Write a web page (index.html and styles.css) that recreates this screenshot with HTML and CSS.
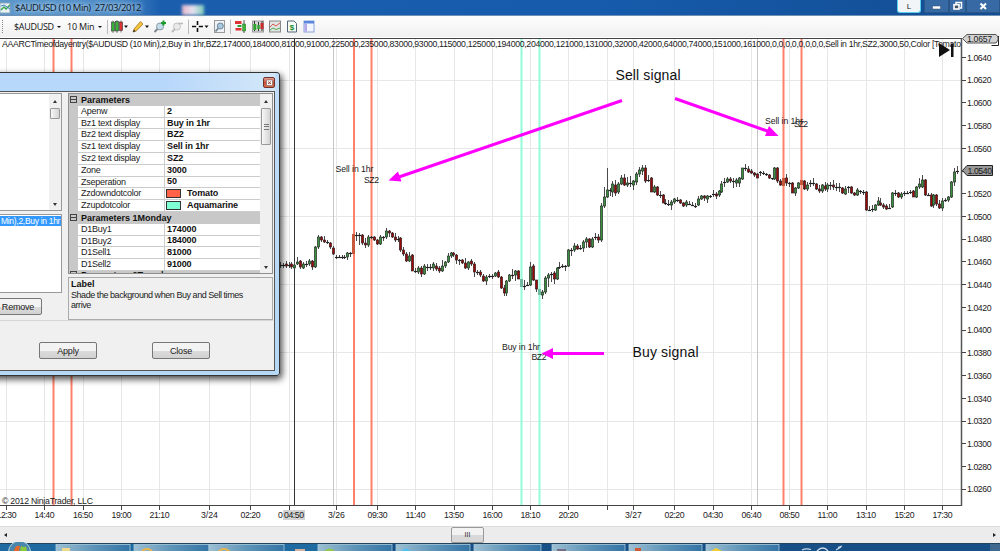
FILE: index.html
```html
<!DOCTYPE html>
<html lang="en">
<head>
    <meta charset="UTF-8">
    <meta name="viewport" content="width=device-width, initial-scale=1.0">
    <title>$AUDUSD (10 Min) 27/03/2012</title>
    <link rel="stylesheet" href="styles.css">
</head>
<body>

    <div class="titlebar">
        <svg class="app-icon" width="11" height="12" viewBox="0 0 11 12">
            <rect x="0" y="1" width="10" height="10" fill="#e9f3f6" stroke="#8ba8bb"/>
            <path d="M1 8L4 5L6 7L10 3" fill="none" stroke="#38a34a" stroke-width="1.4"/>
            <path d="M1 4L4 3L7 5L10 7" fill="none" stroke="#3d7fc4"/>
        </svg>
        <span class="title">$AUDUSD (10 Min)&nbsp; 27/03/2012</span>
        <div class="smudge"></div>
        <div class="window-buttons">
            <span class="link-btn">L</span>
            <span class="win-btn">
                <svg width="28" height="13" viewBox="0 0 28 13"><rect x="9.500" y="6" width="8" height="3" fill="#fff" stroke="#334b70" stroke-width=".5"/></svg>
            </span>
            <span class="win-btn small">
                <svg width="15" height="13" viewBox="0 0 15 13"><path d="M6 4V2.500H11.500V8H10" fill="none" stroke="#fff" stroke-width="1.500"/><rect x="4" y="4.700" width="5" height="4.300" fill="#456" stroke="#fff" stroke-width="1.600"/></svg>
            </span>
            <span class="win-btn close">
                <svg width="33" height="13" viewBox="0 0 33 13"><path d="M13.500 3.500L19 9M19 3.500L13.500 9" stroke="#fff" stroke-width="2"/></svg>
            </span>
        </div>
    </div>

    <div class="toolbar">
        <span class="grip"></span>
        <span class="tool-text symbol">$AUDUSD</span><i class="arrow"></i>
        <span class="tool-text interval">10 Min</span><i class="arrow"></i>
        <span class="divider"></span>
        <svg class="icons" width="210" height="20" viewBox="108 16 210 20">
            <g stroke="#333" stroke-width=".6">
                <path d="M113 19.500V32M117 19V32M121 19.500V31.500"/>
                <rect x="111.500" y="21" width="3" height="9" fill="#35b235"/>
                <rect x="115.500" y="20.500" width="3" height="9.500" fill="#35b235"/>
                <rect x="119.500" y="21" width="3" height="8.500" fill="#d33"/>
            </g>
            <path d="M124 24.500h4l-2 2.500zM145 24.500h4l-2 2.500zM204.500 24.500h4l-2 2.500z" fill="#111"/>
            <path d="M133 31L134 28L140.500 20.500L143 23L136.500 29.800Z" fill="#f5c33b" stroke="#9a6a17" stroke-width=".7"/>
            <path d="M133 31.200L134 28.500L135.700 30.200Z" fill="#333"/>
            <circle cx="160" cy="25.500" r="3.500" fill="#c3dcea" stroke="#8a9aa5"/>
            <path d="M154.500 31L157.500 28" stroke="#7b8790" stroke-width="2"/>
            <path d="M163.500 19.500v5M161 22h5" stroke="#1a9b2d" stroke-width="2"/>
            <circle cx="177" cy="25.500" r="3.500" fill="#e9e9e9" stroke="#c4c4c4"/>
            <path d="M172 31L175 28" stroke="#bbb" stroke-width="2"/>
            <path d="M178 22.500h5" stroke="#bbb" stroke-width="1.600"/>
            <path d="M188.500 18.500V33M230.500 18.500V33" stroke="#bbb"/>
            <path d="M192 25.500h4.200M198.800 25.500h4.200M197.500 20v4M197.500 27v4" stroke="#111" stroke-width="1.600"/>
            <rect x="214.500" y="19.500" width="10" height="12" fill="#eef2f6" stroke="#999"/>
            <circle cx="220.300" cy="25" r="3" fill="#a9c9e0" stroke="#6e8595"/>
            <path d="M215.500 30.500L218 27.500" stroke="#6e8595" stroke-width="1.800"/>
            <rect x="235" y="20" width="6.500" height="3" fill="#d33"/>
            <rect x="237.500" y="24" width="4" height="2" fill="#2e9e3a"/>
            <rect x="235.500" y="27" width="6" height="2.500" fill="#d33"/>
            <path d="M244 19V32" stroke="#555"/>
            <rect x="242.700" y="23" width="3" height="7" fill="#3db63d" stroke="#246b24" stroke-width=".5"/>
            <rect x="252.500" y="20" width="11" height="11" fill="#d8d8d8" stroke="#999"/>
            <path d="M254.500 20V30M258.500 21V30M262 20V30" stroke="#333"/>
            <rect x="253.300" y="23" width="3" height="6" fill="#2ea32e"/>
            <rect x="257.300" y="24" width="2.500" height="4" fill="#2ea32e"/>
            <rect x="260.500" y="22" width="3" height="6" fill="#c92b2b"/>
            <rect x="269.500" y="20" width="11" height="11" fill="#dfe5e0" stroke="#888"/>
            <path d="M270 26L273 23L276 25L280 22" fill="none" stroke="#d55"/>
            <path d="M270 29L273 27L276 28.500L280 27" fill="none" stroke="#5a5"/>
            <path d="M287.500 20H294L296.500 22.500V31H287.500Z" fill="#f4faf4" stroke="#567"/>
            <text x="289.700" y="29" class="dollar">$</text>
            <rect x="304" y="20" width="10" height="11" fill="#f4f6ff" stroke="#8aa3d8"/>
            <rect x="304" y="20" width="10" height="2.500" fill="#5a86dd"/>
            <rect x="304.500" y="23" width="2.500" height="7.500" fill="#b5a8ea"/>
        </svg>
    </div>

    <div class="workspace">
        <svg class="chart" id="chart" width="1000" height="489" viewBox="0 37 1000 489">
            <g id="grid"></g>
            <g class="session">
                <path d="M333.500 38V505M757.500 38V505"/>
            </g>
            <g id="zones"></g>
            <path d="M294.500 38V505" stroke="#333"/>
            <g id="candles"></g>
            <g id="shades"></g>

            <g class="chart-text">
                <text x="2" y="47" textLength="959" lengthAdjust="spacing">AAARCTimeofdayentry($AUDUSD (10 Min),2,Buy in 1hr,BZ2,174000,184000,81000,91000,225000,235000,83000,93000,115000,125000,194000,204000,121000,131000,32000,42000,64000,74000,151000,161000,0,0,0,0,0,0,0,0,Sell in 1hr,SZ2,3000,50,Color [Tomato</text>
                <text x="335.500" y="172" textLength="38">Sell in 1hr</text>
                <text x="364" y="182.500" textLength="15">SZ2</text>
                <text x="765" y="123.500" textLength="38">Sell in 1hr</text>
                <text x="794" y="126.500" textLength="14">SZ2</text>
                <text x="502" y="349.500" textLength="38">Buy in 1hr</text>
                <text x="531.500" y="360" textLength="15">BZ2</text>
                <text x="2" y="504" textLength="91">© 2012 NinjaTrader, LLC</text>
            </g>

            <g class="note">
                <text x="615.500" y="80" textLength="65">Sell signal</text>
                <text x="632.500" y="356.500" textLength="66">Buy signal</text>
            </g>
            <g class="pointer">
                <path d="M622 100.500L396 178M675 98.500L770 132M604 353.500H548"/>
                <polygon points="388.500,180.500 398,171.500 401.500,181.500"/>
                <polygon points="778.500,136 769,126 765,136"/>
                <polygon points="541.500,353.500 553,348 553,359"/>
            </g>

            <path d="M939 43L950 50L939 57Z" fill="#111"/>
            <rect x="951" y="43.500" width="2.500" height="13.500" fill="#111"/>
            <path d="M0 38.500H961.500M0 505.500H961.500" stroke="#444"/>
            <path d="M961.500 38V506" stroke="#555" stroke-width="1.500"/>
            <g id="axis"></g>

            <path d="M991.500 45.500H998.500V36" fill="none" stroke="#222"/>
            <path d="M962.500 38.500L967 34.500H996L998 37V40L996 43H967Z" fill="#d3d3d3" stroke="#555"/>
            <path d="M962.500 170.500L967 165.500H992.500V175.500H967Z" fill="#999" stroke="#222"/>
            <g class="chart-text">
                <text x="967" y="42" textLength="25">1.0657</text>
                <text x="967.500" y="174" textLength="24.500">1.0540</text>
            </g>
        </svg>

        <div class="dialog">
            <div class="dialog-title">
                <span class="dialog-close">
                    <svg width="9" height="8" viewBox="0 0 9 8"><rect x="1.500" y="1" width="6" height="5.500" rx="1" fill="#fff" stroke="#555" stroke-width=".5"/><path d="M3 2.500L6 5M6 2.500L3 5" stroke="#943" stroke-width="1"/></svg>
                </span>
            </div>
            <div class="dialog-body">
                <div class="dialog-columns">
                    <div class="left-col">
                        <div class="list">
                            <div class="scroll">
                                <i class="up"></i><b class="thumb"></b><i class="down"></i>
                            </div>
                        </div>
                        <div class="list-2"><span class="selected">Min),2,Buy in 1hr</span></div>
                        <button class="btn remove">Remove</button>
                    </div>
                    <div class="right-col">
                        <div class="props">
                            <div class="rows">
                                <div class="group"><span class="minus"></span>Parameters</div>
                                <div class="row"><span>Apenw</span><b>2</b></div>
                                <div class="row"><span>Bz1 text display</span><b>Buy in 1hr</b></div>
                                <div class="row"><span>Bz2 text display</span><b>BZ2</b></div>
                                <div class="row"><span>Sz1 text display</span><b>Sell in 1hr</b></div>
                                <div class="row"><span>Sz2 text display</span><b>SZ2</b></div>
                                <div class="row"><span>Zone</span><b>3000</b></div>
                                <div class="row"><span>Zseperation</span><b>50</b></div>
                                <div class="row"><span>Zzdowndotcolor</span><b><i class="swatch tomato"></i>Tomato</b></div>
                                <div class="row"><span>Zzupdotcolor</span><b><i class="swatch aqua"></i>Aquamarine</b></div>
                                <div class="group"><span class="minus"></span>Parameters 1Monday</div>
                                <div class="row"><span>D1Buy1</span><b>174000</b></div>
                                <div class="row"><span>D1Buy2</span><b>184000</b></div>
                                <div class="row"><span>D1Sell1</span><b>81000</b></div>
                                <div class="row"><span>D1Sell2</span><b>91000</b></div>
                                <div class="group last"><span class="minus"></span>Parameters 2Tuesday</div>
                            </div>
                            <div class="scroll">
                                <i class="up"></i><b class="thumb long"></b><i class="down"></i>
                            </div>
                        </div>
                        <div class="help">
                            <b>Label</b>
                            <p>Shade the background when Buy and Sell times<br>arrive</p>
                        </div>
                    </div>
                </div>
                <div class="dialog-footer">
                    <button class="btn">Apply</button>
                    <button class="btn">Close</button>
                    <span class="resize"></span>
                </div>
            </div>
        </div>
    </div>

    <div class="hscroll">
        <i class="left"></i>
        <span class="hthumb">III</span>
        <i class="right"></i>
    </div>

    <div class="taskbar">
        <svg width="1000" height="9" viewBox="0 542 1000 9">
            <defs>
                <linearGradient id="task" x1="0" x2="1">
                    <stop offset="0" stop-color="#9dbfd2"/>
                    <stop offset=".5" stop-color="#5e94b8"/>
                    <stop offset="1" stop-color="#3474a6"/>
                </linearGradient>
            </defs>
            <rect y="543" width="1000" height="8" fill="#174f86"/>
            <rect y="543" width="320" height="8" fill="#1f6ba1"/>
            <g fill="url(#task)" stroke="#a9cbdd" stroke-width=".8">
                <rect x="56" y="544.500" width="74" height="9"/>
                <rect x="134" y="544.500" width="75" height="9"/>
                <rect x="209" y="544.500" width="75" height="9"/>
                <rect x="318" y="544.500" width="74" height="9"/>
                <rect x="396" y="544.500" width="74" height="9"/>
                <rect x="474" y="544.500" width="67" height="9"/>
                <rect x="552" y="544.500" width="73" height="9"/>
                <rect x="629" y="544.500" width="73" height="9"/>
                <rect x="706" y="544.500" width="73" height="9"/>
            </g>
            <path d="M0 543.500H1000" stroke="#24435c"/>
            <circle cx="19.500" cy="552" r="11" fill="#4a86ab" stroke="#b4d3e2"/>
            <path d="M14 551Q15 545 20 546L19 551Z" fill="#e5672c"/>
            <path d="M20 551L21 546Q25 548 26 546L27 551Z" fill="#8cc63f"/>
            <rect x="62" y="548" width="8" height="3" fill="#f0d98a"/>
            <path d="M142 551Q147 547 152 551M219 551Q224 547 229 551" fill="none" stroke="#eab54a" stroke-width="2"/>
            <rect x="295" y="549" width="10" height="2" fill="#d8b0a0"/>
            <path d="M324 551Q330 546 335 551Z" fill="#93c94a"/>
            <path d="M401 551Q406 546 411 551Z" fill="#52c0ee"/>
            <rect x="557" y="549" width="9" height="2" fill="#766e88"/>
            <rect x="635" y="548" width="6" height="3" fill="#cf5937"/>
            <path d="M711 551L716 548L722 551Z" fill="#f5cf32"/>
            <path d="M802 550Q806 548 811 549.500M817 551Q823 545 828 551M836 550L841 547M838 547.500L842 546" fill="none" stroke="#cbdcea" stroke-width="1.300"/>
            <rect x="990" y="544" width="10" height="7" fill="#41698f"/>
        </svg>
    </div>

    <script src="chart.js"></script>
</body>
</html>
```

FILE: styles.css
```css
* {
    box-sizing: border-box;
}
body {
    margin: 0;
    width: 1000px;
    height: 551px;
    overflow: hidden;
    display: flex;
    flex-direction: column;
    background: #fff;
    font-family: "Liberation Sans", Arial, sans-serif;
    font-size: 9px;
    color: #222;
}

/* title bar */
.titlebar {
    height: 16px;
    flex: none;
    display: flex;
    align-items: center;
    background: linear-gradient(90deg, #5d97cb 0, #4c8bc6 120px, #1b5eae 160px, #165bac 600px, #134d92 1000px);
    border-bottom: 1px solid #6f91b5;
}
.title {
    margin-left: 4px;
    font-family: "Open Sans", "Noto Sans", sans-serif;
    font-size: 9.5px;
    letter-spacing: -0.42px;
    width: 127px;
    white-space: nowrap;
    color: #0b1623;
    text-shadow: 0 0 4px #cfe6fa, 0 0 5px #b9d8f2;
}
.smudge {
    margin-left: 40px;
    width: 22px;
    height: 10px;
    align-self: flex-end;
    background: linear-gradient(90deg, #e5b5c8, #e6e2f0 50%, #79c9b7);
    filter: blur(1.5px);
}
.window-buttons {
    margin-left: auto;
    align-self: flex-start;
    display: flex;
}
.link-btn {
    width: 24px;
    height: 13px;
    margin-right: 3px;
    border: 1px solid #59cfee;
    border-top: 0;
    border-radius: 0 0 3px 3px;
    background: #f2f5f7;
    text-align: center;
    font-size: 8px;
    line-height: 13px;
}
.win-btn {
    width: 25px;
    height: 13px;
    display: flex;
    justify-content: center;
    overflow: hidden;
    background: #376aa4;
    border: 1px solid #2a5688;
    border-top: 0;
}
.win-btn svg {
    flex: none;
}
.win-btn.small {
    width: 17px;
}
.win-btn.close {
    width: 34px;
}

/* toolbar */
.toolbar {
    height: 21px;
    flex: none;
    display: flex;
    align-items: center;
    background: linear-gradient(#fdfdfd, #f1f1f1);
}
.grip {
    width: 2px;
    height: 13px;
    margin: 0 10px 0 2px;
    border-left: 1px dotted #888;
}
.tool-text {
    font-family: "Open Sans", "Noto Sans", sans-serif;
    font-size: 9px;
    white-space: nowrap;
    color: #111;
}
.symbol {
    width: 43px;
    letter-spacing: -0.3px;
}
.interval {
    width: 31px;
    margin-left: 6px;
    letter-spacing: -0.2px;
}
.arrow {
    border: 2px solid transparent;
    border-top: 2.5px solid #111;
    border-bottom: 0;
}
.divider {
    width: 1px;
    height: 14px;
    margin-left: 5px;
    background: #bbb;
}
.dollar {
    font-size: 8px;
    font-weight: bold;
    fill: #188a2a;
}

/* chart */
.workspace {
    position: relative;
    height: 489px;
    flex: none;
}
.chart {
    display: block;
    overflow: visible;
}
.chart-text {
    font-size: 8.7px;
    fill: #1a1a1a;
}
.note {
    font-size: 14px;
    fill: #111;
}
.pointer path {
    stroke: #ff00ff;
    stroke-width: 3;
    fill: none;
}
.pointer polygon {
    fill: #ff00ff;
}
.session path {
    stroke: #c6c6c6;
}
.grid-line {
    stroke: #e7e7e7;
}
.tick {
    stroke: #444;
}
.x-label {
    text-anchor: middle;
}
.wick {
    stroke: #4a4a4a;
}
.up-bar {
    fill: #3c8f40;
    stroke: #222;
    stroke-width: 0.6;
}
.down-bar {
    fill: #9a0808;
    stroke: #222;
    stroke-width: 0.6;
}
.doji {
    stroke: #222;
    stroke-width: 1.2;
}

/* parameter dialog */
.dialog {
    position: absolute;
    left: -10px;
    top: 35px;
    width: 290px;
    height: 304px;
    padding: 0 4px 4px 0;
    border: 1px solid #333;
    border-radius: 0 3px 3px 0;
    background: linear-gradient(#c0dcf8, #b5d8f5);
    box-shadow: 2px 3px 7px rgba(0, 0, 0, 0.75);
}
.dialog-title {
    height: 18px;
    display: flex;
    justify-content: flex-end;
    padding: 4px 0 0;
    background: linear-gradient(90deg, #b7d7fb 60%, #d3e7f8);
}
.dialog-close {
    width: 12px;
    height: 11px;
    display: flex;
    align-items: center;
    justify-content: center;
    background: linear-gradient(#e9a193, #c84e36 50%, #d96d50);
    border: 1px solid #6d322b;
    border-radius: 2px;
}
.dialog-body {
    height: 280px;
    border: 1px solid #555;
    background: #f0f0f0;
    padding: 1px 1px 0 8px;
}
.dialog-columns {
    height: 228px;
    display: flex;
    gap: 6px;
    border-bottom: 1px solid #d7d7d7;
}
.left-col {
    width: 62px;
    flex: none;
    display: flex;
    flex-direction: column;
}
.list {
    height: 118px;
    background: #fff;
    border: 1px solid #999;
    border-left: 0;
    display: flex;
    justify-content: flex-end;
}
.list-2 {
    height: 79px;
    margin-top: 3px;
    background: #fff;
    border: 1px solid #999;
    border-left: 0;
    overflow: hidden;
}
.selected {
    display: block;
    height: 10px;
    margin-top: 1px;
    padding-left: 1px;
    line-height: 10px;
    font-size: 8.5px;
    letter-spacing: -0.3px;
    white-space: nowrap;
    background: #3399ff;
    color: #fff;
}
.scroll {
    width: 12px;
    background: #f0f0f0;
    display: flex;
    flex-direction: column;
    align-items: center;
    padding: 6px 0 4px;
}
.up {
    border: 2px solid transparent;
    border-bottom: 3px solid #333;
    border-top: 0;
}
.down {
    margin-top: auto;
    border: 2px solid transparent;
    border-top: 3px solid #333;
    border-bottom: 0;
}
.thumb {
    width: 10px;
    height: 11px;
    margin-top: 5px;
    border: 1px solid #999;
    border-radius: 1px;
    background: linear-gradient(90deg, #f7f7f7, #d4d4d4);
}
.thumb.long {
    height: 37px;
    display: flex;
    align-items: center;
    justify-content: center;
}
.thumb.long::after {
    content: "";
    width: 5px;
    height: 6px;
    background: repeating-linear-gradient(#777 0 1px, transparent 1px 2.4px);
}
.right-col {
    width: 205px;
    flex: none;
}
.props {
    height: 181px;
    display: flex;
    border: 1px solid #8f8f8f;
    background: #c8c8c8;
    overflow: hidden;
}
.rows {
    width: 191px;
}
.group {
    height: 11.8px;
    display: flex;
    align-items: center;
    background: #c8c8c8;
    font-weight: bold;
    font-size: 9px;
    color: #111;
}
.group.last {
    height: 2px;
    align-items: flex-start;
    line-height: 9px;
    overflow: hidden;
}
.minus {
    width: 7px;
    height: 7px;
    flex: none;
    margin: 0 4px 0 1px;
    border: 1px solid #444;
    background: linear-gradient(transparent 2px, #444 2px 3px, transparent 3px);
}
.row {
    height: 11.8px;
    margin-left: 9px;
    display: flex;
    line-height: 11px;
    font-size: 9px;
    background: #fff;
    border-bottom: 1px solid #ccc;
}
.row span {
    width: 87px;
    padding-left: 3px;
    border-right: 1px solid #ccc;
    letter-spacing: -0.25px;
}
.row b {
    padding-left: 2px;
    display: flex;
    align-items: center;
    letter-spacing: -0.1px;
    color: #111;
}
.swatch {
    width: 15px;
    height: 9px;
    margin: 0 6px 0 -1px;
    border: 1px solid #333;
}
.tomato {
    background: #ff6347;
}
.aqua {
    background: #7fffd4;
}
.help {
    height: 43px;
    margin-top: 3px;
    padding: 1px 2px;
    border: 1px solid #aaa;
    line-height: 11px;
}
.help b {
    color: #111;
}
.help p {
    margin: 1px 0 0;
    line-height: 9.5px;
    white-space: nowrap;
    letter-spacing: -0.45px;
    font-size: 9px;
}
.btn {
    width: 58px;
    height: 17px;
    padding: 0;
    border: 1px solid #777;
    border-radius: 2px;
    background: linear-gradient(#f3f3f3 50%, #dcdcdc 50%, #d1d1d1);
    font: 9px "Liberation Sans", Arial, sans-serif;
    letter-spacing: -0.2px;
    color: #222;
}
.btn.remove {
    width: 45px;
    margin: 5px 0 0 -3px;
    padding: 0 3px 0 0;
}
.dialog-footer {
    position: relative;
    display: flex;
    gap: 55px;
    padding: 21px 0 0 39px;
}
.resize {
    position: absolute;
    right: 0;
    bottom: -10px;
    width: 6px;
    height: 6px;
    background: radial-gradient(#bbb 40%, transparent 45%) 0 0 / 2px 2px;
    clip-path: polygon(100% 0, 100% 100%, 0 100%);
}

/* bottom scroll bar and task bar */
.hscroll {
    height: 17px;
    flex: none;
    display: flex;
    align-items: center;
    background: #ececec;
    border-top: 1px solid #ddd;
}
.left {
    margin-left: 4px;
    border: 2px solid transparent;
    border-right: 3px solid #222;
    border-left: 0;
}
.right {
    margin: 0 4px 0 auto;
    border: 2px solid transparent;
    border-left: 3px solid #222;
    border-right: 0;
}
.hthumb {
    width: 33px;
    height: 16px;
    margin-left: 444px;
    border: 1px solid #999;
    border-radius: 2px;
    background: linear-gradient(#f2f2f2 50%, #d8d8d8 50%);
    text-align: center;
    font-size: 7px;
    line-height: 13px;
}
.taskbar {
    height: 9px;
    flex: none;
    margin-top: -1px;
}
.taskbar svg {
    display: block;
}
```

FILE: chart.js
```js
const NS = "http://www.w3.org/2000/svg";

function add(parent, tag, attrs, text) {
    const el = document.createElementNS(NS, tag);
    for (const key in attrs) el.setAttribute(key, attrs[key]);
    if (text) el.textContent = text;
    document.getElementById(parent).appendChild(el);
    return el;
}

// time axis
const times = [
    [6.5, "12:30"], [44.5, "14:40"], [83, "16:50"], [121.5, "19:00"], [159.5, "21:10"],
    [209.5, "3/24"], [250.5, "02:20"], [289, ""], [336.5, "3/26"], [377.5, "09:30"],
    [415.5, "11:40"], [454, "13:50"], [492.5, "16:00"], [530.5, "18:10"], [568.5, "20:20"],
    [607, ""], [633.5, "3/27"], [674.5, "02:20"], [713, "04:30"], [751.5, "06:40"],
    [789.5, "08:50"], [827.5, "11:00"], [866, "13:10"], [904.5, "15:20"], [942.5, "17:30"]
];
times.forEach(([x, label]) => {
    const gx = Math.floor(x) + 0.5;
    add("grid", "path", { d: `M${gx} 39V505`, class: "grid-line" });
    add("axis", "path", { d: `M${gx} 505V510`, class: "tick" });
    const t = add("axis", "text", { x: x, y: 518, class: "chart-text x-label" }, label);
    if (label.includes(":")) t.setAttribute("textLength", 20);
});
// cursor time
add("axis", "text", { x: 278, y: 518, class: "chart-text" }, "0");
add("axis", "rect", { x: 283, y: 510, width: 22, height: 10, fill: "#d3d3d3" });
add("axis", "text", { x: 294, y: 518, class: "chart-text x-label", textLength: 20 }, "04:50");

// price axis
for (let i = 0; i < 20; i++) {
    const y = 57.5 + i * 22.72;
    const line = Math.floor(y) + 0.5;
    if (i % 3 === 1) add("grid", "path", { d: `M0 ${line}H961`, class: "grid-line" });
    add("axis", "path", { d: `M962 ${line}h4`, class: "tick" });
    if (i !== 5) {
        add("axis", "text", { x: 967, y: y + 3.2, class: "chart-text", textLength: 24.5 }, (1.064 - i * 0.002).toFixed(4));
    }
}

// buy and sell time markers
const zones = [[53.5, "sell"], [71.5, "sell"], [354, "sell"], [371.5, "sell"], [521.5, "buy"], [539.5, "buy"], [783.5, "sell"], [801.5, "sell"]];
zones.forEach(([x, type]) => {
    add("zones", "path", { d: `M${x} 39V505`, stroke: type === "sell" ? "#ff8069" : "#94fbd9", "stroke-width": 2 });
});

// high, body top, body bottom, low, direction (g up, r down, d flat)
const bars = `262 265 266 268 d|263 265 266 268 d|261 264 266 268 r|262 265 266 268 d|
262 264 267 269 r|262 265 268 269 g|257 262 264 265 g|260 261 267 269 r|262 264 268 269 g|261 264 265 267 d|259 261 264 266 g|260 261 267 270 r|246 247 267 268 g|235 237 247 249 g|
236 237 240 242 r|236 240 242 243 r|240 242 243 244 d|242 243 247 249 r|246 248 254 255 r|255 257 258 259 d|255 257 257 258 d|255 257 257 259 d|255 257 258 259 d|252 253 257 260 g|252 253 254 257 d|
234 234 254 254 s|232 235 235 241 d|233 235 235 245 d|234 235 243 245 r|238 243 245 248 r|235 237 245 247 g|236 237 238 239 d|236 237 240 241 r|239 240 244 245 r|235 237 244 245 g|236 237 237 241 d|
228 231 237 239 g|230 231 233 237 r|232 233 237 238 r|233 237 240 242 r|236 239 240 242 d|237 238 250 252 r|247 250 254 256 r|252 254 261 262 r|252 256 261 262 g|254 255 271 271 r|268 271 271 273 d|
266 268 272 274 g|266 268 274 277 r|264 266 274 275 g|264 267 267 271 d|264 267 268 270 d|262 264 268 271 g|263 266 269 271 r|266 268 271 273 r|260 266 271 272 g|261 262 266 268 g|253 256 262 263 g|
252 253 256 258 g|252 253 255 257 r|254 255 260 264 r|259 260 260 265 d|259 260 263 264 r|258 263 268 269 r|261 262 268 270 g|259 261 264 266 r|262 264 272 277 r|270 272 272 275 d|270 272 275 277 r|
274 276 281 282 r|275 277 281 285 g|274 276 277 278 d|274 276 276 279 d|272 273 276 277 g|270 272 277 278 r|276 277 288 289 r|285 288 293 296 r|280 281 293 296 g|274 275 281 282 g|269 275 275 279 d|
270 271 275 281 g|270 271 279 279 r|278 279 287 287 b|280 286 287 290 d|282 285 285 286 d|262 267 285 286 g|264 266 280 281 r|280 280 289 292 r|288 289 295 299 b|290 292 295 299 g|276 278 292 294 g|
273 275 278 287 g|272 274 276 282 d|271 273 279 284 r|267 268 279 280 g|262 267 267 269 d|264 266 266 268 d|265 266 267 271 d|249 250 266 267 g|248 250 250 256 d|243 246 250 252 g|244 246 249 250 r|
245 248 248 250 d|240 242 248 252 g|237 239 242 248 g|238 239 247 248 r|237 239 247 248 g|233 237 238 240 d|234 237 240 243 r|203 206 240 242 g|187 197 206 208 g|168 190 197 198 g|188 190 191 196 d|
181 184 192 197 g|180 185 193 196 r|182 184 192 194 g|175 178 184 185 g|174 178 185 186 r|177 183 185 187 g|176 183 183 187 d|180 181 185 190 g|172 174 182 185 g|167 170 174 177 g|165 168 171 175 g|
165 168 181 183 r|175 180 180 182 d|177 178 192 192 r|185 187 192 193 g|186 187 195 196 r|191 195 196 198 d|194 195 203 203 r|199 203 203 205 d|200 204 205 206 d|200 202 205 210 g|198 199 202 204 g|
197 200 200 202 d|199 200 203 204 r|202 203 206 207 r|200 202 205 207 g|201 204 204 205 d|202 205 205 206 d|203 206 206 208 d|196 199 205 206 g|195 196 199 200 g|195 196 198 201 r|195 196 199 203 g|
195 196 196 198 d|190 194 195 197 d|192 194 196 199 r|190 191 195 197 g|181 184 192 193 g|178 182 183 187 d|177 179 182 183 g|177 179 181 183 r|178 181 182 188 d|178 180 183 187 g|177 178 183 187 g|
168 168 179 180 g|164 168 169 171 d|166 169 172 173 r|169 171 173 174 r|172 173 175 177 r|173 174 178 178 r|171 172 173 176 d|171 173 174 175 d|173 174 175 176 d|174 175 178 179 r|178 178 179 180 d|
167 168 179 180 g|167 168 181 183 r|179 181 185 186 r|178 178 186 186 s|174 178 183 186 r|182 183 183 187 d|182 183 193 193 r|187 188 193 196 g|182 183 188 189 g|180 180 185 185 s|180 181 189 190 r|
182 185 189 191 g|180 183 185 187 d|178 183 184 186 d|183 184 189 190 r|185 189 191 193 r|184 185 191 193 g|182 186 189 191 r|183 185 189 192 g|182 185 185 190 d|180 185 187 190 r|183 187 187 191 d|
183 187 187 192 d|187 188 193 194 r|186 189 194 195 g|186 187 187 193 d|186 187 193 194 r|192 193 195 196 r|188 190 195 196 g|190 191 191 194 d|190 192 192 195 d|191 192 210 211 r|206 210 210 211 d|
205 209 209 212 d|204 205 210 211 g|197 201 205 206 g|198 203 205 206 r|203 205 207 209 r|204 206 209 210 r|204 208 208 209 d|192 193 207 208 g|190 193 193 196 d|192 193 197 198 r|192 194 197 199 g|
191 193 193 196 d|191 193 193 194 d|190 192 192 194 d|190 191 197 197 r|186 187 197 198 g|178 184 187 189 g|175 180 187 188 g|179 180 195 196 r|193 195 195 196 d|193 195 206 207 r|194 195 205 208 g|
194 195 204 206 r|200 204 208 209 r|198 201 208 211 g|198 200 200 202 d|196 197 200 202 g|181 182 197 198 g|168 172 182 186 g|166 171 171 174 d`;

bars.split("|").forEach((bar, i) => {
    const [high, top, bottom, low, dir] = bar.trim().split(" ");
    const x = 280.2 + i * 2.945;
    const cx = Math.floor(x) + 0.5;
    const height = bottom - top;
    if (dir === "s" || dir === "b") {
        add("shades", "rect", { x: cx - 1.5, y: top, width: 3, height: height, fill: dir === "s" ? "#c8583c" : "#70bba0" });
        return;
    }
    add("candles", "path", { d: `M${cx} ${high}V${low}`, class: "wick" });
    if (dir === "d") {
        add("candles", "path", { d: `M${cx - 1.5} ${+top + 0.5}h3`, class: "doji" });
    } else {
        add("candles", "rect", { x: cx - 1.2, y: top, width: 2.4, height: height, class: dir === "g" ? "up-bar" : "down-bar" });
    }
});
```
